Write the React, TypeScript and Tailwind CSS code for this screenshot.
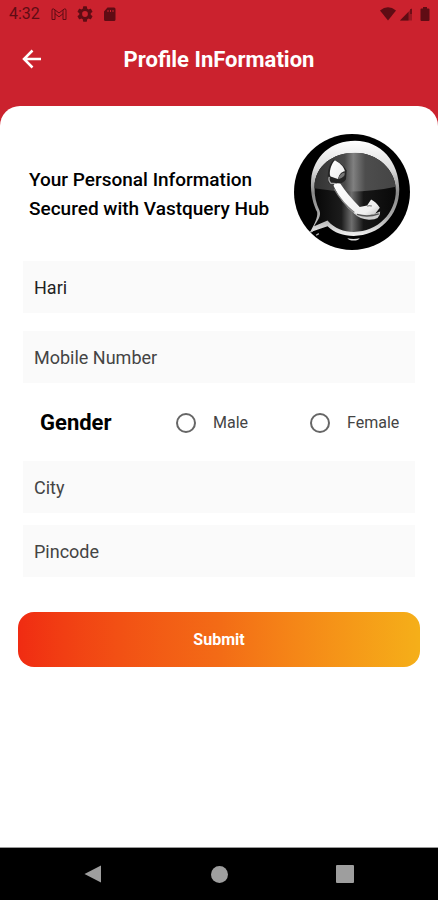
import React from "react";

function StatusBar() {
  return (
    <div className="flex h-7 items-center justify-between pr-2 pl-[9px] text-[#5f0c14]">
      <div className="flex items-center">
        <span className="w-[42px] text-base leading-7">4:32</span>
        <svg className="mr-[10px] h-4 w-4" viewBox="0 0 16 16" fill="none" stroke="currentColor" strokeWidth="1">
          <path d="M1 13.500V4.200Q1 2.300 2.800 3L8 7l5.200-4Q15 2.300 15 4.200v9.300h-3V7.800l-4 3-4-3v5.700ZM4 4v4M12 4v4" />
        </svg>
        <svg className="mr-[8px] h-4 w-4" viewBox="2 2 20 20" fill="currentColor">
          <path d="M19.140 12.940c.04-.3.060-.61.060-.94 0-.32-.02-.64-.07-.94l2.030-1.580a.49.49 0 0 0 .12-.61l-1.920-3.320a.49.49 0 0 0-.59-.22l-2.390.96a7 7 0 0 0-1.620-.94l-.36-2.540a.48.48 0 0 0-.48-.41h-3.840a.47.47 0 0 0-.47.41l-.36 2.540a7.300 7.300 0 0 0-1.620.94l-2.390-.96a.48.48 0 0 0-.59.22L2.740 8.870a.47.47 0 0 0 .12.61l2.030 1.580a6.500 6.500 0 0 0-.02 1.880l-2.030 1.580a.49.49 0 0 0-.12.61l1.920 3.320c.12.22.37.29.59.22l2.390-.96c.5.38 1.030.7 1.620.94l.36 2.540c.05.24.24.41.48.41h3.840c.24 0 .44-.17.470-.41l.36-2.540a7 7 0 0 0 1.620-.94l2.390.96c.22.08.47 0 .59-.22l1.920-3.320a.47.47 0 0 0-.12-.61zM12 15.600a3.600 3.600 0 1 1 0-7.200 3.600 3.600 0 0 1 0 7.200z" />
        </svg>
        <svg className="h-4 w-4" viewBox="0 0 16 16" fill="currentColor">
          <path fillRule="evenodd" d="M6.500 1.500H13q1.500 0 1.500 1.500v10.500q0 1.500-1.500 1.500H4.500Q3 15 3 13.500V5.500ZM6.500 4v2h1V4Zm2.500 0v2h1V4Zm2.500 0v2h1V4Z" />
        </svg>
      </div>
      <div className="flex items-center gap-[3px]">
        <svg className="h-4 w-4" viewBox="0 0 16 16" fill="currentColor">
          <path d="M0 4.500Q8-2 16 4.500L8 14.500Z" />
        </svg>
        <svg className="mr-[4px] h-4 w-[14px]" viewBox="0 0 14 16">
          <path d="M13 2v12.500H1Z" fill="currentColor" opacity=".45" />
          <path d="M9.500 6v8.500H1Z" fill="currentColor" />
          <path d="M12 3v5" stroke="currentColor" strokeWidth="1.500" />
        </svg>
        <svg className="h-4 w-[10px]" viewBox="0 0 10 16" fill="currentColor">
          <path d="M3 1h4v1.500h1.500q1 0 1 1V14q0 1-1 1h-7q-1 0-1-1V3.500q0-1 1-1H3Z" />
        </svg>
      </div>
    </div>
  );
}

function PhoneLogo() {
  return (
    <svg className="h-[116px] w-[116px] shrink-0" viewBox="43 28 346 346" role="img" aria-label="Phone">
      <defs>
        <linearGradient id="rim" x1="0" y1="0" x2="0" y2="1">
          <stop offset="0" stopColor="#fff" />
          <stop offset=".3" stopColor="#ddd" />
          <stop offset=".55" stopColor="#888" />
          <stop offset=".8" stopColor="#aaa" />
          <stop offset="1" stopColor="#f2f2f2" />
        </linearGradient>
        <linearGradient id="upper" x1="0" y1="0" x2="1" y2="0">
          <stop offset="0" stopColor="#303030" />
          <stop offset=".38" stopColor="#4a4a4a" />
          <stop offset=".48" stopColor="#808080" />
          <stop offset=".62" stopColor="#4d4d4d" />
          <stop offset="1" stopColor="#444" />
        </linearGradient>
        <linearGradient id="lower" x1="0" y1="0" x2="1" y2="0">
          <stop offset="0" stopColor="#050505" />
          <stop offset=".34" stopColor="#1c1c1c" />
          <stop offset=".46" stopColor="#6e6e6e" />
          <stop offset=".6" stopColor="#161616" />
          <stop offset="1" stopColor="#080808" />
        </linearGradient>
        <linearGradient id="metal" x1="0" y1="0" x2="1" y2="1">
          <stop offset="0" stopColor="#fff" />
          <stop offset=".8" stopColor="#f0f0f0" />
          <stop offset="1" stopColor="#bbb" />
        </linearGradient>
        <clipPath id="glass">
          <path d="M104 187C105 122 160 84 225 84c67 0 121 50 122 112 0 68-54 124-126 124-30 0-56-9-78-34l-40 17c11-18 22-31 16-47-10-20-15-42-15-69Z" />
        </clipPath>
      </defs>
      <circle cx="216" cy="201" r="173" fill="#000" />
      <path d="M94 165C101 93 155 48 225 48c77 0 131 62 132 145 0 80-61 139-136 139-31 0-58-10-78-29l-35 12-17 6c11-21 24-43 21-60-10-21-21-51-18-96Z" fill="url(#rim)" />
      <g clipPath="url(#glass)">
        <rect x="98" y="76" width="254" height="250" fill="url(#lower)" />
        <path d="M98 76h254v108q-128 28-254 5Z" fill="url(#upper)" />
      </g>
      <path d="M162 104c-16 15-22 44-16 70l14 5c14 0 31-4 38-16l2-26c-8-15-24-26-38-33Z" fill="#242424" />
      <path d="M165 106c12 7 27 17 30 33-12 2-17 10-21 23l-22-7c-6-12 2-38 13-49Z" fill="url(#metal)" />
      <path d="M175 163q3-17 19-20 3 14-19 20Z" fill="#777" />
      <path d="M148 156q-3 12 5 19l14 1" fill="none" stroke="#aaa" strokeWidth="4" />
      <path d="M161 182q3-9 20-6 22 34 58 70l22-5 12-18q15 7 26 25l-14 18q-30 10-61 0-42-33-63-84Z" fill="url(#metal)" />
      <path d="M163 192q24 42 60 70" fill="none" stroke="#777" strokeWidth="4" />
      <path d="M220 263q42 15 80-4 1 26-34 25-28-2-46-21Z" fill="#cfcfcf" />
      <path d="M231 268q32 10 65-2" fill="none" stroke="#555" strokeWidth="4" />
      <path d="M261 243q8-3 14 0" fill="none" stroke="#888" strokeWidth="4" />
      <path d="M202 339q18 4 37 0-4 7-18 7t-19-7Z" fill="#ddd" />
      <path d="M91 321l8-3M109 330l8-5" stroke="#b0b0b0" strokeWidth="4" />
    </svg>
  );
}

function Field({ label, name, type = "text" }: { label: string; name: string; type?: string }) {
  return (
    <input
      aria-label={label}
      name={name}
      type={type}
      placeholder={label}
      className="block h-[52px] w-full bg-[#fafafa] px-[11px] text-lg text-[#333] outline-none placeholder:text-[#444] placeholder:opacity-100"
    />
  );
}

function GenderOption({ label }: { label: string }) {
  return (
    <label className="flex items-center gap-[17px] text-base text-[#444]">
      <input
        type="radio"
        name="gender"
        value={label}
        className="h-5 w-5 shrink-0 appearance-none rounded-full border-2 border-[#666] checked:border-[6px]"
      />
      {label}
    </label>
  );
}

export default function App() {
  return (
    <div className="flex min-h-screen flex-col bg-[#cb222e] font-['Roboto',sans-serif]">
      <StatusBar />
      <header className="grid h-[78px] grid-cols-[1fr_auto_1fr] items-start pt-[15px]">
        <button type="button" aria-label="Back" className="ml-[22px] flex h-8 w-8 items-center">
          <svg className="h-5 w-5" viewBox="0 0 20 20" fill="none" stroke="#fff" strokeWidth="2.500">
            <path d="M19 10H2M10.500 1.500 2 10l8.500 8.500" />
          </svg>
        </button>
        <h1 className="text-[22px] leading-[34px] font-bold text-white">Profile InFormation</h1>
      </header>
      <main className="flex-1 rounded-t-[20px] bg-white pt-7">
        <form onSubmit={(event) => event.preventDefault()}>
          <div className="flex items-center justify-between pr-7 pl-[29px]">
            <h2 className="pt-[3px] text-[19px] leading-[29px] font-medium text-black">
              Your Personal Information
              <br />
              Secured with Vastquery Hub
            </h2>
            <PhoneLogo />
          </div>
          <div className="mt-[11px] px-[23px]">
            <input
              aria-label="Name"
              name="name"
              defaultValue="Hari"
              className="block h-[52px] w-full bg-[#fafafa] px-[11px] text-lg text-[#222] outline-none"
            />
            <div className="mt-[18px]">
              <Field label="Mobile Number" name="mobile" type="tel" />
            </div>
            <div role="radiogroup" aria-labelledby="gender" className="grid h-[78px] grid-cols-[153fr_134fr_105fr] items-center pt-px">
              <span id="gender" className="pl-[17px] text-[22px] font-bold text-black">Gender</span>
              <GenderOption label="Male" />
              <GenderOption label="Female" />
            </div>
            <Field label="City" name="city" />
            <div className="mt-3">
              <Field label="Pincode" name="pincode" />
            </div>
          </div>
          <div className="mt-[35px] px-[18px]">
            <button
              type="submit"
              className="h-[55px] w-full rounded-2xl bg-linear-to-r from-[#f02b12] via-[#f36b16] to-[#f5af19] text-base font-bold text-white"
            >
              Submit
            </button>
          </div>
        </form>
      </main>
      <nav className="grid h-[53px] grid-cols-3 items-center border-t border-[#999] bg-black px-[30px] text-[#9e9e9e]">
        <button type="button" aria-label="Back" className="flex justify-center">
          <svg className="h-[18px] w-[18px]" viewBox="0 0 18 18" fill="currentColor">
            <path d="M17 .5v17L.5 9Z" />
          </svg>
        </button>
        <button type="button" aria-label="Home" className="flex justify-center">
          <span className="h-[17px] w-[17px] rounded-full bg-current" />
        </button>
        <button type="button" aria-label="Recent apps" className="flex justify-center">
          <span className="h-[18px] w-[18px] rounded-[1px] bg-current" />
        </button>
      </nav>
    </div>
  );
}
